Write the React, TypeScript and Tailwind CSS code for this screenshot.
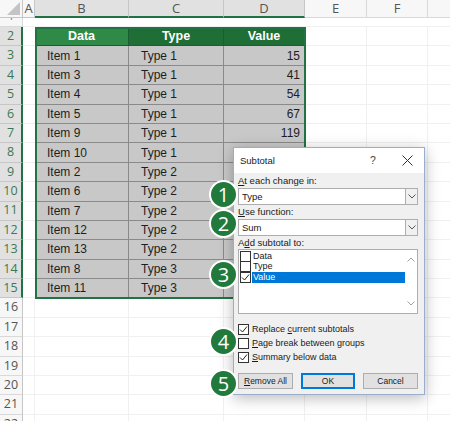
import React from "react";

const rows: [string, string, number][] = [
  ["Item 1", "Type 1", 15],
  ["Item 3", "Type 1", 41],
  ["Item 4", "Type 1", 54],
  ["Item 5", "Type 1", 67],
  ["Item 9", "Type 1", 119],
  ["Item 10", "Type 1", 98],
  ["Item 2", "Type 2", 23],
  ["Item 6", "Type 2", 76],
  ["Item 7", "Type 2", 45],
  ["Item 12", "Type 2", 88],
  ["Item 13", "Type 2", 31],
  ["Item 8", "Type 3", 62],
  ["Item 11", "Type 3", 50],
];

function RowHead({ n, active }: { n: number; active?: boolean }) {
  return (
    <div
      className={
        active
          ? "w-[23px] shrink-0 flex items-center justify-center bg-[#e1e1e1] text-[#3b7a52] border-b border-[#c6c6c6] border-r-2 border-r-[#217346] font-['Open_Sans',sans-serif] text-[12.5px] leading-none"
          : "w-[23px] shrink-0 flex items-center justify-center bg-[#f7f7f7] text-[#555] border-b border-[#d9d9d9] border-r border-r-[#c6c6c6] font-['Open_Sans',sans-serif] text-[12.5px] leading-none"
      }
    >
      {n}
    </div>
  );
}

function EmptyTail() {
  return (
    <>
      <div className="w-[62px] shrink-0 border-r border-b border-[#f0f0f0]" />
      <div className="w-[61px] shrink-0 border-r border-b border-[#f0f0f0]" />
      <div className="flex-1 border-b border-[#f0f0f0]" />
    </>
  );
}

function EmptyRow({ n }: { n: number }) {
  return (
    <div className="flex h-[19.4px] shrink-0">
      <RowHead n={n} />
      <div className="w-[12px] shrink-0 border-r border-b border-[#f0f0f0]" />
      <div className="w-[94px] shrink-0 border-r border-b border-[#f0f0f0]" />
      <div className="w-[95px] shrink-0 border-r border-b border-[#f0f0f0]" />
      <div className="w-[81px] shrink-0 border-r border-b border-[#f0f0f0]" />
      <EmptyTail />
    </div>
  );
}

function Check({ on }: { on?: boolean }) {
  return (
    <span className="w-[11px] h-[11px] shrink-0 border border-[#333] bg-white flex items-center justify-center">
      {on && (
        <svg width="9" height="9" viewBox="0 0 9 9">
          <path d="M1 4.5 L3.5 7 L8 1.5" fill="none" stroke="#222" strokeWidth="1" />
        </svg>
      )}
    </span>
  );
}

function Chevron({ up, color = "#555" }: { up?: boolean; color?: string }) {
  return (
    <svg width="8" height="5" viewBox="0 0 8 5">
      <path d={up ? "M0.5 4.5 L4 1 L7.5 4.5" : "M0.5 0.5 L4 4 L7.5 0.5"} fill="none" stroke={color} strokeWidth="1" />
    </svg>
  );
}

function Combo({ value }: { value: string }) {
  return (
    <div className="h-[17px] w-[180px] bg-white border border-[#adadad] flex items-center pl-[3px] text-[9.5px]">
      <span className="flex-1">{value}</span>
      <span className="w-[12px] h-[15px] bg-[#f0f0f0] border-l border-[#adadad] flex items-center justify-center">
        <Chevron />
      </span>
    </div>
  );
}

function Badge({ n, top }: { n: number; top: string }) {
  return (
    <div
      className={`absolute left-[209px] ${top} w-[29px] h-[29px] rounded-full bg-[#217a3c] border-2 border-white flex items-center justify-center text-white font-['Open_Sans',sans-serif] text-[20px] leading-none`}
    >
      {n}
    </div>
  );
}

export default function App() {
  return (
    <div className="relative w-[450px] h-[421px] overflow-hidden bg-white font-['Liberation_Sans',Arial,sans-serif] text-[12px] text-[#1e1e1e]">
      <div className="flex flex-col">
        {/* column headers */}
        <div className="flex h-[18px] shrink-0 font-['Open_Sans',sans-serif] text-[13px] leading-none text-[#555]">
          <div className="relative w-[23px] shrink-0 bg-[#f7f7f7] border-r border-b border-[#c6c6c6]">
            <div className="absolute right-[2px] bottom-[2px] w-0 h-0 border-l-[13px] border-l-transparent border-b-[13px] border-b-[#c4c4c4]" />
          </div>
          <div className="w-[12px] shrink-0 bg-[#f7f7f7] border-r border-b border-[#c6c6c6] flex items-center justify-center">A</div>
          <div className="w-[94px] shrink-0 bg-[#e1e1e1] border-r border-[#c6c6c6] border-b-2 border-b-[#217346] flex items-center justify-center">B</div>
          <div className="w-[95px] shrink-0 bg-[#e1e1e1] border-r border-[#c6c6c6] border-b-2 border-b-[#217346] flex items-center justify-center">C</div>
          <div className="w-[81px] shrink-0 bg-[#e1e1e1] border-r border-[#c6c6c6] border-b-2 border-b-[#217346] flex items-center justify-center">D</div>
          <div className="w-[62px] shrink-0 bg-[#f7f7f7] border-r border-b border-[#d9d9d9] flex items-center justify-center">E</div>
          <div className="w-[61px] shrink-0 bg-[#f7f7f7] border-r border-b border-[#d9d9d9] flex items-center justify-center">F</div>
          <div className="flex-1 bg-[#f7f7f7] border-b border-[#d9d9d9]" />
        </div>

        {/* row 1, mostly hidden */}
        <div className="flex h-[9px] shrink-0">
          <div className="w-[23px] shrink-0 bg-[#f7f7f7] border-r border-b border-[#d9d9d9] overflow-hidden flex justify-center text-[#888] font-['Open_Sans',sans-serif] text-[12.5px] leading-[14px]">
            <span className="-mt-[9px]">1</span>
          </div>
          <div className="flex-1 border-b border-[#f0f0f0]" />
        </div>

        {/* header row 2 */}
        <div className="flex h-[19.4px] shrink-0">
          <RowHead n={2} active />
          <div className="w-[12px] shrink-0 border-b border-[#f0f0f0]" />
          <div className="w-[94px] shrink-0 bg-[#2e8a46] border-r border-b border-[#1b5e2f] flex items-center justify-center text-white font-bold text-[12.5px]">Data</div>
          <div className="w-[95px] shrink-0 bg-[#1e6e35] border-r border-b border-[#1b5e2f] flex items-center justify-center text-white font-bold text-[12.5px]">Type</div>
          <div className="w-[81px] shrink-0 bg-[#1e6e35] border-r border-b border-[#1b5e2f] flex items-center justify-center text-white font-bold text-[12.5px]">Value</div>
          <EmptyTail />
        </div>

        {rows.map((r, i) => (
          <div key={i} className="flex h-[19.4px] shrink-0">
            <RowHead n={i + 3} active />
            <div className="w-[12px] shrink-0 border-b border-[#f0f0f0]" />
            <div className="w-[94px] shrink-0 bg-[#c8c8c8] border-r border-b border-[#8a8a8a] flex items-center pl-[12px]">{r[0]}</div>
            <div className="w-[95px] shrink-0 bg-[#c8c8c8] border-r border-b border-[#8a8a8a] flex items-center pl-[12px]">{r[1]}</div>
            <div className="w-[81px] shrink-0 bg-[#c8c8c8] border-r border-b border-[#8a8a8a] flex items-center justify-end pr-[4px]">{r[2]}</div>
            <EmptyTail />
          </div>
        ))}

        {[16, 17, 18, 19, 20, 21, 22].map((n) => (
          <EmptyRow key={n} n={n} />
        ))}
      </div>

      {/* selection outline */}
      <div className="absolute left-[35px] top-[27px] w-[271px] h-[272px] border-2 border-[#217346] pointer-events-none" />

      {/* Subtotal dialog */}
      <div className="absolute left-[233px] top-[147px] w-[192px] h-[248px] bg-[#f0f0f0] border border-[#9aaecb] shadow-[0_3px_14px_rgba(0,0,0,0.28)] text-[9.5px] leading-none text-[#1a1a1a] flex flex-col">
        <div className="h-[25px] shrink-0 bg-white flex items-center pl-[6px]">
          <span className="flex-1 text-[9.5px]">Subtotal</span>
          <span className="w-[34px] text-center text-[10.5px] text-[#444]">?</span>
          <span className="w-[34px] flex justify-center">
            <svg width="11" height="11" viewBox="0 0 11 11">
              <path d="M0.5 0.5 L10.5 10.5 M10.5 0.5 L0.5 10.5" stroke="#333" strokeWidth="1" />
            </svg>
          </span>
        </div>
        <div className="flex flex-col pl-[4px] pr-[6px]">
          <div className="h-[14px] mt-[1px] flex items-center">
            <span><u>A</u>t each change in:</span>
          </div>
          <Combo value="Type" />
          <div className="h-[14px] flex items-center">
            <span><u>U</u>se function:</span>
          </div>
          <Combo value="Sum" />
          <div className="h-[13px] flex items-center">
            <span>A<u>d</u>d subtotal to:</span>
          </div>
          <div className="h-[65px] w-[180px] bg-white border border-[#adadad] flex text-[9px]">
            <div className="flex-1 flex flex-col pt-[1px] pl-[1px]">
              <div className="h-[10.5px] flex items-center gap-[1px]">
                <Check />
                <span className="pl-[1px]">Data</span>
              </div>
              <div className="h-[10.5px] flex items-center gap-[1px]">
                <Check />
                <span className="pl-[1px]">Type</span>
              </div>
              <div className="h-[10.5px] flex items-center gap-[1px]">
                <Check on />
                <span className="flex-1 h-[10.5px] bg-[#0078d7] text-white flex items-center pl-[1px]">Value</span>
              </div>
            </div>
            <div className="w-[12px] flex flex-col items-center justify-between py-[7px]">
              <Chevron up color="#a0a0a0" />
              <Chevron color="#a0a0a0" />
            </div>
          </div>
          <div className="mt-[8px] h-[14px] flex items-center gap-[3px] text-[9px]">
            <Check on />
            <span className="whitespace-nowrap">Replace <u>c</u>urrent subtotals</span>
          </div>
          <div className="h-[14px] flex items-center gap-[3px] text-[9px]">
            <Check />
            <span className="whitespace-nowrap"><u>P</u>age break between groups</span>
          </div>
          <div className="h-[14px] flex items-center gap-[3px] text-[9px]">
            <Check on />
            <span className="whitespace-nowrap"><u>S</u>ummary below data</span>
          </div>
          <div className="mt-[9px] flex gap-[8px] text-[8.5px]">
            <div className="w-[55px] h-[16px] bg-[#e1e1e1] border border-[#adadad] flex items-center justify-center">
              <span className="whitespace-nowrap"><u>R</u>emove All</span>
            </div>
            <div className="w-[54px] h-[16px] bg-[#e1e1e1] border-2 border-[#0078d7] flex items-center justify-center">OK</div>
            <div className="w-[55px] h-[16px] bg-[#e1e1e1] border border-[#adadad] flex items-center justify-center">Cancel</div>
          </div>
        </div>
      </div>

      <Badge n={1} top="top-[180px]" />
      <Badge n={2} top="top-[209px]" />
      <Badge n={3} top="top-[260px]" />
      <Badge n={4} top="top-[327px]" />
      <Badge n={5} top="top-[369px]" />
    </div>
  );
}
